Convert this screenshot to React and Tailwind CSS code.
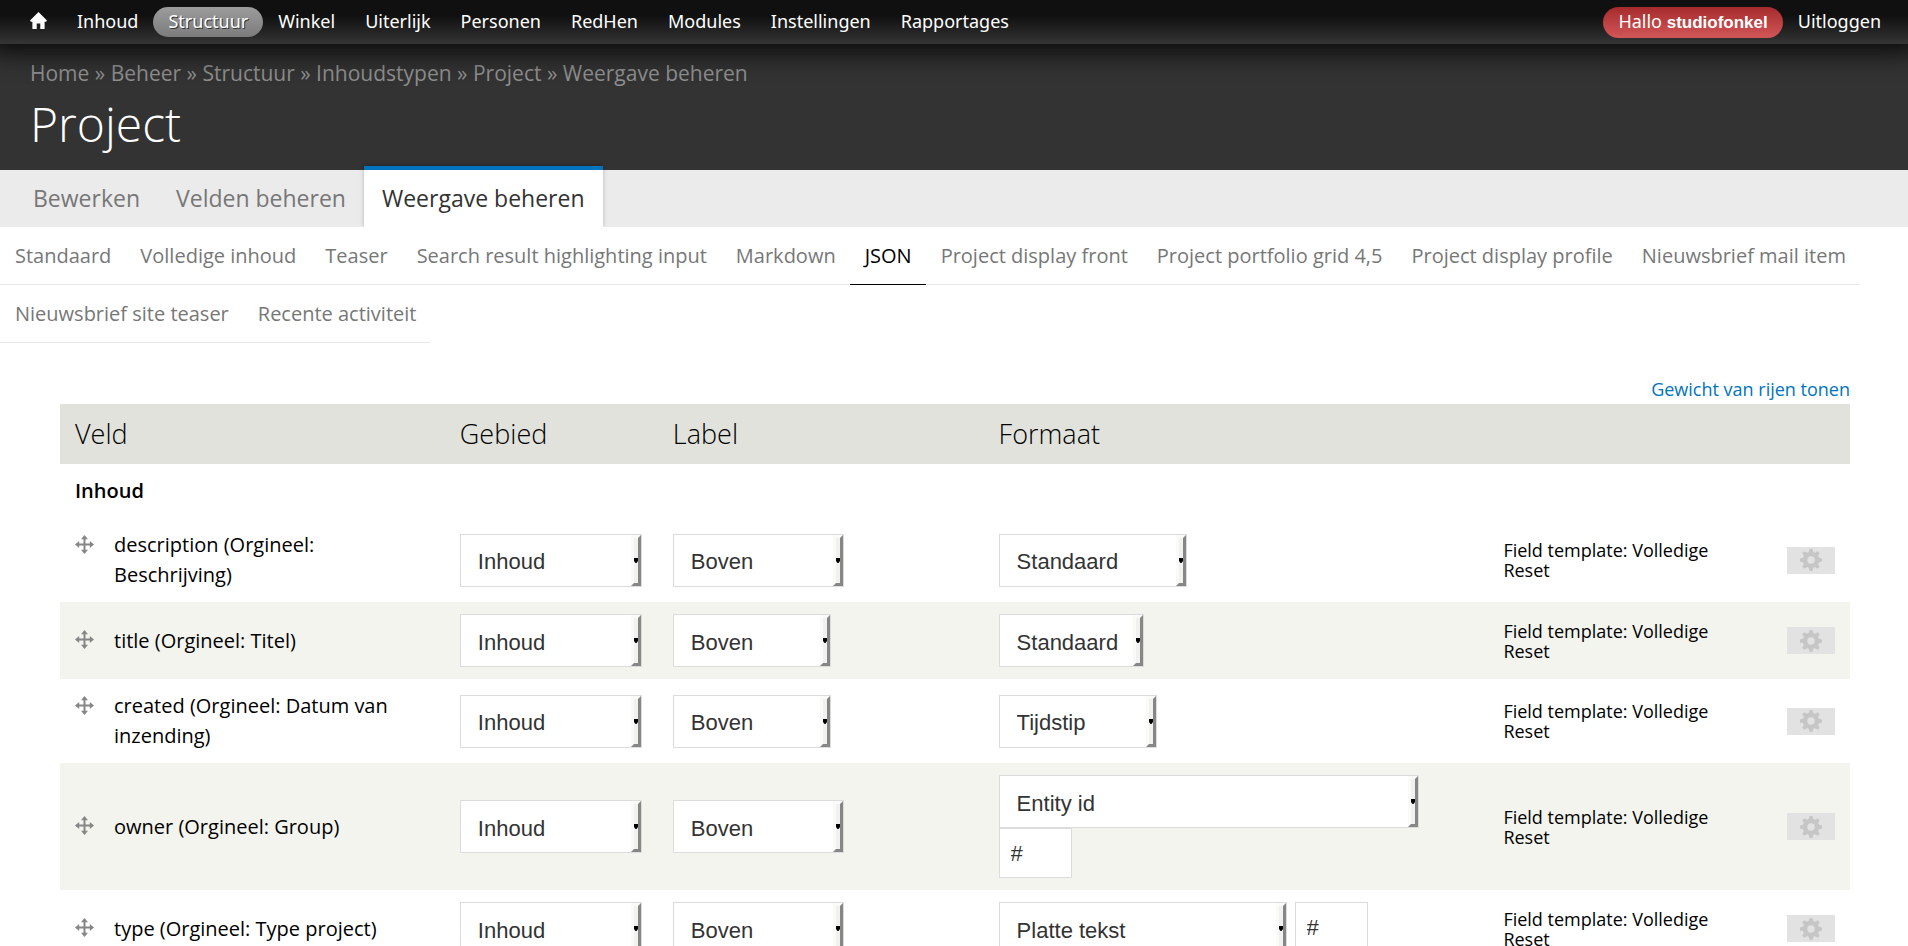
const menuItems = [
  "Inhoud",
  "Structuur",
  "Winkel",
  "Uiterlijk",
  "Personen",
  "RedHen",
  "Modules",
  "Instellingen",
  "Rapportages",
];

const breadcrumb = ["Home", "Beheer", "Structuur", "Inhoudstypen", "Project", "Weergave beheren"];

const primaryTabs = ["Bewerken", "Velden beheren", "Weergave beheren"];

const viewModes = [
  "Standaard",
  "Volledige inhoud",
  "Teaser",
  "Search result highlighting input",
  "Markdown",
  "JSON",
  "Project display front",
  "Project portfolio grid 4,5",
  "Project display profile",
  "Nieuwsbrief mail item",
  "Nieuwsbrief site teaser",
  "Recente activiteit",
];

const fields = [
  { id: "description", name: "description (Orgineel: Beschrijving)", label: "w-[171px]", format: "Standaard", width: "w-[188px]" },
  { id: "title", name: "title (Orgineel: Titel)", label: "w-[158px]", format: "Standaard", width: "w-[145px]" },
  { id: "created", name: "created (Orgineel: Datum van inzending)", label: "w-[158px]", format: "Tijdstip", width: "w-[158px]" },
  { id: "owner", name: "owner (Orgineel: Group)", label: "w-[171px]", format: "Entity id", width: "w-[420px]", extra: true },
  { id: "type", name: "type (Orgineel: Type project)", label: "w-[171px]", format: "Platte tekst", width: "w-[288px]", extra: true },
];

function HomeIcon() {
  return (
    <svg viewBox="0 0 17 17" className="h-[17px] w-[17px]" fill="#fff" aria-hidden="true">
      <path d="M8.5 0 17 8.6l-1 1.2h-1.4V17h-4.3v-5.6H6.7V17H2.4V9.8H1L0 8.6z" />
    </svg>
  );
}

function DragIcon() {
  return (
    <svg viewBox="0 0 19 19" className="h-[19px] w-[19px]" fill="#868686" aria-hidden="true">
      <path d="M8.5 3h2v13h-2zM3 8.5h13v2H3z" />
      <path d="M9.5 0 13 4.2H6zM9.5 19 6 14.8h7zM0 9.5 4.2 6v7zM19 9.5 14.8 13V6z" />
    </svg>
  );
}

const teeth = [0, 45, 90, 135, 180, 225, 270, 315];

function GearIcon() {
  return (
    <svg viewBox="-11 -11 22 22" className="h-[22px] w-[22px]" fill="#c6c6c6" aria-hidden="true">
      <circle r="6" fill="none" stroke="#c6c6c6" strokeWidth="4.6" />
      {teeth.map((angle) => (
        <path key={angle} d="M-2.4-7-1.4-11H1.4L2.4-7z" transform={`rotate(${angle})`} />
      ))}
    </svg>
  );
}

function Select({ label, value, width }) {
  return (
    <span className={`relative block h-[53px] ${width}`}>
      <select
        aria-label={label}
        defaultValue={value}
        className="block h-full w-full appearance-none rounded-none border border-[#dcdcdc] bg-white pt-[3px] pr-3 pl-[17px] font-['Liberation_Sans',sans-serif] text-[22px] text-[#333]"
      >
        <option>{value}</option>
      </select>
      <span className="pointer-events-none absolute inset-y-px right-px flex w-[10px] items-center border-[3px] border-[#fafaf9] border-r-[#868686] border-b-[#868686] bg-[#f1f1ef]">
        <svg viewBox="0 0 4 5" className="h-[5px] w-[4px]" aria-hidden="true">
          <path d="M0 0h4v3L2.5 5h-1L0 3z" />
        </svg>
      </span>
    </span>
  );
}

function FieldRow({ field, shaded }) {
  return (
    <tr className={shaded ? "bg-[#f3f4ee]" : "bg-white"}>
      <td className="px-[15px] py-3">
        <div className="flex items-start gap-5">
          <a href="#drag" title="Slepen om te herschikken" className="flex h-[30px] shrink-0 items-center pb-[2px]">
            <DragIcon />
          </a>
          <span className="text-[20px] leading-[30px]">{field.name}</span>
        </div>
      </td>
      <td className="px-[15px] py-3">
        <Select label={`Gebied voor ${field.id}`} value="Inhoud" width="w-[182px]" />
      </td>
      <td className="px-[15px] py-3">
        <Select label={`Label voor ${field.id}`} value="Boven" width={field.label} />
      </td>
      <td className="px-[15px] py-3">
        <div className="flex flex-wrap items-start gap-x-2">
          <Select label={`Formaat voor ${field.id}`} value={field.format} width={field.width} />
          {field.extra && (
            <input
              type="text"
              aria-label={`Formaatoptie voor ${field.id}`}
              defaultValue="#"
              className="block h-[50px] w-[73px] border border-[#dcdcdc] bg-white px-[11px] pt-[2px] font-['Liberation_Sans',sans-serif] text-[22px] text-[#333]"
            />
          )}
        </div>
      </td>
      <td className="px-[15px] py-3 text-[18px] leading-5">Field template: Volledige Reset</td>
      <td className="px-[15px] py-3">
        <button
          type="button"
          aria-label={`Instellingen van ${field.id}`}
          className="ml-auto flex h-[27px] w-12 items-center justify-center bg-[#e2e2e2]"
        >
          <GearIcon />
        </button>
      </td>
    </tr>
  );
}

export default function App() {
  return (
    <div className="bg-white font-['Open_Sans',sans-serif] text-black">
      <nav
        aria-label="Beheermenu"
        className="relative z-10 flex h-11 justify-between bg-linear-to-b from-[#101010] from-35% to-[#353535] px-3 pt-[7px] font-['Noto_Sans',sans-serif] text-[18px] leading-7 text-white shadow-[0_-10px_30px_15px_#000]"
      >
        <ul className="flex">
          <li>
            <a href="#home" aria-label="Home" className="flex h-[30px] items-center pr-[15px] pb-1 pl-[18px]">
              <HomeIcon />
            </a>
          </li>
          {menuItems.map((item) => (
            <li key={item}>
              <a
                href={`#${item}`}
                className={
                  item === "Structuur"
                    ? "block rounded-full bg-linear-to-b from-[#9c9c9c] to-[#7c7c7c] px-[15px] pb-[2px] [text-shadow:1px_1px_0_#333]"
                    : "block px-[15px] pb-[2px]"
                }
              >
                {item}
              </a>
            </li>
          ))}
        </ul>
        <ul className="flex">
          <li>
            <a href="#account" className="block h-[31px] rounded-full bg-linear-to-b from-[#a52a2d] to-[#d25658] px-[15px]">
              Hallo <strong className="font-['Liberation_Sans',sans-serif] text-[17px] font-bold">studiofonkel</strong>
            </a>
          </li>
          <li>
            <a href="#logout" className="block px-[15px] pb-[2px]">
              Uitloggen
            </a>
          </li>
        </ul>
      </nav>

      <header className="bg-[#333] px-[30px] py-4">
        <nav aria-label="Kruimelpad" className="-mt-px text-[21px] leading-7 text-[#8f8f8f]">
          {breadcrumb.map((crumb, index) => (
            <span key={crumb}>
              {index > 0 && " » "}
              <a href={`#${crumb}`}>{crumb}</a>
            </span>
          ))}
        </nav>
        <h1 className="mt-[7px] text-[48px] leading-[60px] font-light text-white">Project</h1>
      </header>

      <nav aria-label="Primaire tabs" className="bg-[#ebebeb] pl-[15px] text-[23px] leading-[57px] text-[#777]">
        <ul className="flex">
          {primaryTabs.map((tab) => (
            <li key={tab}>
              <a
                href={`#${tab}`}
                className={
                  tab === "Weergave beheren"
                    ? "relative -mt-1 block border-t-4 border-[#0074bd] bg-white px-[18px] text-[#333] shadow-[0_-1px_4px_rgba(0,0,0,0.25)]"
                    : "block px-[18px]"
                }
              >
                {tab}
              </a>
            </li>
          ))}
        </ul>
      </nav>

      <nav aria-label="Weergavemodi" className="relative bg-white text-[20px] leading-[57px] text-[#777]">
        <ul className="flex flex-wrap">
          {viewModes.map((mode) => (
            <li key={mode}>
              <a
                href={`#${mode}`}
                className={
                  mode === "JSON"
                    ? "block border-b border-black pr-[14px] pl-[15px] text-black"
                    : "block border-b border-[#e8e8e8] pr-[14px] pl-[15px]"
                }
              >
                {mode}
              </a>
            </li>
          ))}
        </ul>
      </nav>

      <main className="mt-[34px] mr-[58px] ml-[60px]">
        <div className="mb-[3px] text-right text-[18px] leading-6">
          <a href="#gewicht" className="text-[#0074bd]">
            Gewicht van rijen tonen
          </a>
        </div>
        <table className="w-full table-fixed border-collapse text-left">
          <colgroup>
            <col className="w-[21.5%]" />
            <col className="w-[11.9%]" />
            <col className="w-[18.2%]" />
            <col className="w-[28.2%]" />
            <col className="w-[15%]" />
            <col className="w-[5.2%]" />
          </colgroup>
          <thead>
            <tr className="h-[60px] bg-[#e1e2dc] text-[27px]">
              <th className="px-[15px] font-light">Veld</th>
              <th className="px-[15px] font-light">Gebied</th>
              <th className="px-[15px] font-light">Label</th>
              <th className="px-[15px] font-light" colSpan={3}>
                Formaat
              </th>
            </tr>
          </thead>
          <tbody>
            <tr>
              <td colSpan={6} className="px-[15px] py-3 text-[20px] leading-[30px] font-semibold">
                Inhoud
              </td>
            </tr>
            {fields.map((field, index) => (
              <FieldRow key={field.id} field={field} shaded={index % 2 === 1} />
            ))}
          </tbody>
        </table>
      </main>
    </div>
  );
}
